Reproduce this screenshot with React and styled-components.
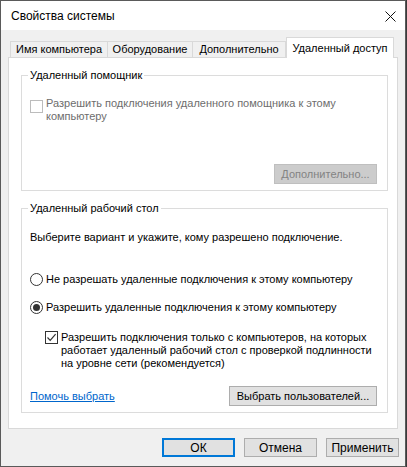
import React from "react";
import styled, { createGlobalStyle } from "styled-components";

const GlobalStyle = createGlobalStyle`
  html, body {
    margin: 0;
    padding: 0;
    background: #3a3a3a;
  }
  body {
    font-family: "Liberation Sans", Arial, sans-serif;
    font-size: 11px;
    color: #000;
  }
`;

const Window = styled.div`
  width: 404px;
  height: 465px;
  border: 1px solid #5a5a5a;
  background: #f0f0f0;
  display: flex;
  flex-direction: column;
`;

const TitleBar = styled.div`
  height: 29px;
  background: #fff;
  display: flex;
  align-items: center;
  justify-content: space-between;
  padding: 0 9px 0 10px;
  flex-shrink: 0;
`;

const Title = styled.span`
  font-size: 12px;
  margin-top: 1px;
`;

const CloseButton = styled.div`
  width: 12px;
  height: 12px;
  display: flex;
  align-items: center;
  justify-content: center;
  margin-top: 1px;
`;

const Body = styled.div`
  flex: 1;
  padding: 7px 7px 0 7px;
  display: flex;
  flex-direction: column;
`;

const TabRow = styled.div`
  display: flex;
  align-items: flex-end;
  height: 21px;
  padding-left: 2px;
  position: relative;
  z-index: 1;
  margin-bottom: -1px;
`;

const Tab = styled.div`
  box-sizing: border-box;
  width: ${(p) => p.$w}px;
  height: ${(p) => (p.$active ? 21 : 17)}px;
  border: 1px solid #d9d9d9;
  border-bottom: ${(p) => (p.$active ? "none" : "1px solid #d9d9d9")};
  border-left: ${(p) => (p.$first || p.$active ? "1px solid #d9d9d9" : "none")};
  background: ${(p) => (p.$active ? "#fff" : "#f0f0f0")};
  display: flex;
  align-items: ${(p) => (p.$active ? "flex-start" : "center")};
  justify-content: center;
  padding-top: ${(p) => (p.$active ? "3px" : "0")};
  line-height: 15px;
  white-space: nowrap;
`;

const Panel = styled.div`
  box-sizing: border-box;
  width: 390px;
  height: 372px;
  background: #fff;
  border: 1px solid #d9d9d9;
  padding: 17px 9px 0 12px;
  display: flex;
  flex-direction: column;
  gap: 17px;
`;

const Group = styled.section`
  border: 1px solid #dcdcdc;
  padding: 0 10px 6px 8px;
  display: flex;
  flex-direction: column;
`;

const GroupTitle = styled.div`
  align-self: flex-start;
  margin: -8px 0 0 -2px;
  padding: 0 2px;
  background: #fff;
  line-height: 15px;
`;

const CheckRow = styled.label`
  display: flex;
  align-items: flex-start;
  gap: 3px;
  margin-top: ${(p) => p.$mt || 0}px;
  margin-left: ${(p) => p.$ml || 0}px;
  color: ${(p) => (p.$disabled ? "#6d6d6d" : "#000")};
  line-height: 13px;
  white-space: nowrap;
`;

const Box = styled.span`
  box-sizing: border-box;
  width: 13px;
  height: 13px;
  flex-shrink: 0;
  border: 1px solid ${(p) => (p.$disabled ? "#bcbcbc" : "#333")};
  background: #fff;
  margin-top: ${(p) => p.$offset || 0}px;
  display: flex;
  align-items: center;
  justify-content: center;
`;

const Radio = styled.span`
  box-sizing: border-box;
  width: 13px;
  height: 13px;
  border-radius: 50%;
  border: 1px solid #333;
  background: #fff;
  flex-shrink: 0;
  display: flex;
  align-items: center;
  justify-content: center;

  &::after {
    content: "";
    display: ${(p) => (p.$checked ? "block" : "none")};
    width: 7px;
    height: 7px;
    border-radius: 50%;
    background: #333;
  }
`;

const RadioRow = styled.label`
  display: flex;
  align-items: center;
  gap: 3px;
  margin-top: ${(p) => p.$mt}px;
  line-height: 15px;
  white-space: nowrap;
`;

const Text = styled.div`
  margin-top: ${(p) => p.$mt}px;
  line-height: 15px;
  white-space: nowrap;
`;

const Button = styled.button`
  box-sizing: border-box;
  width: ${(p) => p.$w}px;
  height: ${(p) => p.$h || 20}px;
  background: ${(p) => (p.$disabled ? "#cccccc" : "#e1e1e1")};
  border: ${(p) =>
    p.$default ? "2px solid #0078d7" : `1px solid ${p.$disabled ? "#bfbfbf" : "#adadad"}`};
  color: ${(p) => (p.$disabled ? "#838383" : "#000")};
  font-family: inherit;
  font-size: ${(p) => p.$fs || 11}px;
  padding: 0;
  line-height: 1;
  cursor: default;
`;

const ActionRow = styled.div`
  display: flex;
  justify-content: ${(p) => p.$justify || "flex-end"};
  align-items: center;
  margin-top: ${(p) => p.$mt}px;
`;

const HelpLink = styled.a`
  color: #0066cc;
  text-decoration: underline;
  cursor: pointer;
`;

const Footer = styled.div`
  display: flex;
  justify-content: flex-end;
  gap: 9px;
  padding: 9px 0 0 0;
  margin-right: -1px;
`;

const CheckMark = () => (
  <svg width="11" height="11" viewBox="0 0 11 11">
    <path d="M1.5 5.5 L4.2 8.3 L9.6 2.2" fill="none" stroke="#333" strokeWidth="1.2" />
  </svg>
);

const CloseIcon = () => (
  <svg width="11" height="11" viewBox="0 0 11 11">
    <path d="M0.5 0.5 L10.5 10.5 M10.5 0.5 L0.5 10.5" stroke="#111" strokeWidth="1" />
  </svg>
);

const tabs = [
  { label: "Имя компьютера", w: 98 },
  { label: "Оборудование", w: 85 },
  { label: "Дополнительно", w: 93 },
  { label: "Удаленный доступ", w: 108, active: true },
];

export default function App() {
  return (
    <>
      <GlobalStyle />
      <Window>
        <TitleBar>
          <Title>Свойства системы</Title>
          <CloseButton>
            <CloseIcon />
          </CloseButton>
        </TitleBar>
        <Body>
          <TabRow>
            {tabs.map((t, i) => (
              <Tab key={t.label} $w={t.w} $active={t.active} $first={i === 0}>
                {t.label}
              </Tab>
            ))}
          </TabRow>
          <Panel>
            <Group>
              <GroupTitle>Удаленный помощник</GroupTitle>
              <CheckRow $disabled $mt={14}>
                <Box $disabled $offset={3} />
                <span>
                  Разрешить подключения удаленного помощника к этому
                  <br />
                  компьютеру
                </span>
              </CheckRow>
              <ActionRow $mt={41}>
                <Button $w={103} $disabled>
                  Дополнительно...
                </Button>
              </ActionRow>
            </Group>
            <Group>
              <GroupTitle>Удаленный рабочий стол</GroupTitle>
              <Text $mt={14}>Выберите вариант и укажите, кому разрешено подключение.</Text>
              <RadioRow $mt={27}>
                <Radio />
                <span>Не разрешать удаленные подключения к этому компьютеру</span>
              </RadioRow>
              <RadioRow $mt={13}>
                <Radio $checked />
                <span>Разрешить удаленные подключения к этому компьютеру</span>
              </RadioRow>
              <CheckRow $mt={16} $ml={15}>
                <Box>
                  <CheckMark />
                </Box>
                <span>
                  Разрешить подключения только с компьютеров, на которых
                  <br />
                  работает удаленный рабочий стол с проверкой подлинности
                  <br />
                  на уровне сети (рекомендуется)
                </span>
              </CheckRow>
              <ActionRow $mt={16} $justify="space-between">
                <HelpLink>Помочь выбрать</HelpLink>
                <Button $w={148}>Выбрать пользователей...</Button>
              </ActionRow>
            </Group>
          </Panel>
          <Footer>
            <Button $w={73} $h={19} $fs={12} $default>
              ОК
            </Button>
            <Button $w={73} $h={19} $fs={12}>
              Отмена
            </Button>
            <Button $w={73} $h={19} $fs={12}>
              Применить
            </Button>
          </Footer>
        </Body>
      </Window>
    </>
  );
}
